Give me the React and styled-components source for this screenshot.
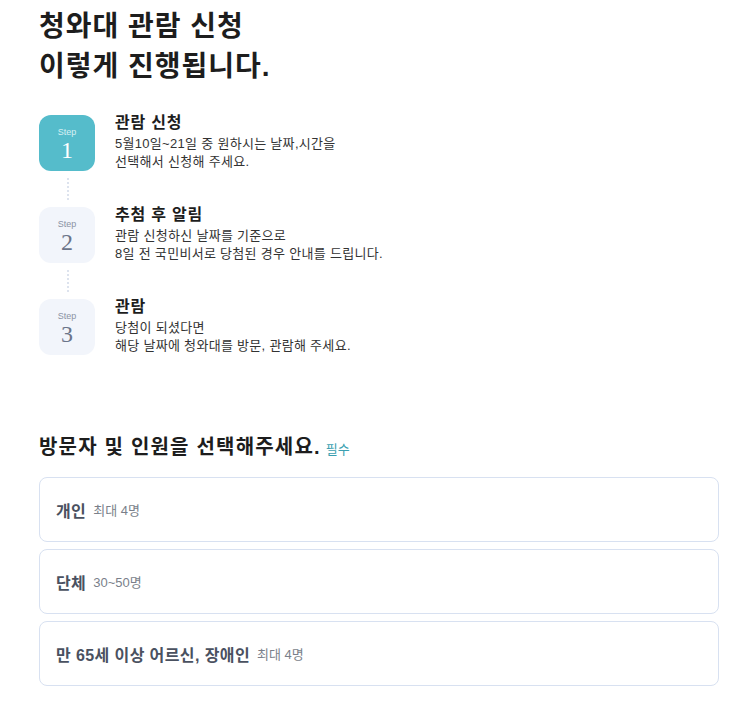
import React from "react";
import styled, { createGlobalStyle } from "styled-components";

const GlobalStyle = createGlobalStyle`
  * { box-sizing: border-box; }
  body {
    margin: 0;
    background: #fff;
    font-family: "Liberation Sans", "Noto Sans CJK KR", sans-serif;
    color: #222;
  }
`;

const steps = [
  {
    no: 1,
    title: "관람 신청",
    lines: ["5월10일~21일 중 원하시는 날짜,시간을", "선택해서 신청해 주세요."],
    active: true,
  },
  {
    no: 2,
    title: "추첨 후 알림",
    lines: ["관람 신청하신 날짜를 기준으로", "8일 전 국민비서로 당첨된 경우 안내를 드립니다."],
  },
  {
    no: 3,
    title: "관람",
    lines: ["당첨이 되셨다면", "해당 날짜에 청와대를 방문, 관람해 주세요."],
  },
];

const options = [
  { name: "개인", limit: "최대 4명" },
  { name: "단체", limit: "30~50명" },
  { name: "만 65세 이상 어르신, 장애인", limit: "최대 4명" },
];

function App() {
  return (
    <Page>
      <GlobalStyle />
      <Heading>
        청와대 관람 신청
        <br />
        이렇게 진행됩니다.
      </Heading>

      <StepList>
        {steps.map((s, i) => (
          <React.Fragment key={s.no}>
            {i > 0 && <Dots />}
            <StepRow>
              <StepBadge $active={s.active}>
                <small>Step</small>
                <b>{s.no}</b>
              </StepBadge>
              <StepText>
                <h3>{s.title}</h3>
                {s.lines.map((l) => (
                  <p key={l}>{l}</p>
                ))}
              </StepText>
            </StepRow>
          </React.Fragment>
        ))}
      </StepList>

      <SectionTitle>
        방문자 및 인원을 선택해주세요.
        <Required>필수</Required>
      </SectionTitle>

      <OptionList>
        {options.map((o) => (
          <OptionCard key={o.name}>
            <strong>{o.name}</strong>
            <span>{o.limit}</span>
          </OptionCard>
        ))}
      </OptionList>
    </Page>
  );
}

const Page = styled.div`
  padding: 7px 28px 20px 39px;
`;

const Heading = styled.h1`
  margin: 0;
  font-size: 28px;
  line-height: 40px;
  font-weight: 700;
  color: #1d1d1d;
  letter-spacing: 1px;
`;

const StepList = styled.div`
  margin-top: 28px;
  display: flex;
  flex-direction: column;
`;

const StepRow = styled.div`
  height: 56px;
  display: flex;
  gap: 20px;
  align-items: flex-start;
`;

const StepBadge = styled.div`
  width: 56px;
  height: 56px;
  flex: none;
  border-radius: 12px;
  background: ${(p) => (p.$active ? "#55bccb" : "#f2f5fb")};
  color: ${(p) => (p.$active ? "#fff" : "#6b7489")};
  display: flex;
  flex-direction: column;
  align-items: center;
  justify-content: center;
  small {
    font-size: 9px;
    line-height: 11px;
    color: ${(p) => (p.$active ? "#d8f0f4" : "#8a92a3")};
    margin-top: 2px;
  }
  b {
    font-family: "Liberation Serif", serif;
    font-weight: 400;
    font-size: 24px;
    line-height: 24px;
  }
`;

const Dots = styled.div`
  width: 0;
  height: 22px;
  margin: 7px 0 7px 28px;
  border-left: 2px dotted #dde3ee;
`;

const StepText = styled.div`
  margin-top: -2px;
  h3 {
    margin: 0 0 2px;
    font-size: 16px;
    line-height: 20px;
    font-weight: 700;
    color: #1d1d1d;
    letter-spacing: 0.8px;
  }
  p {
    margin: 0;
    font-size: 13px;
    line-height: 18px;
    color: #333;
    letter-spacing: 0.3px;
    white-space: nowrap;
  }
`;

const SectionTitle = styled.h2`
  margin: 80px 0 0;
  font-size: 20px;
  line-height: 24px;
  font-weight: 700;
  color: #1d1d1d;
  letter-spacing: 1.2px;
  display: flex;
  align-items: baseline;
`;

const Required = styled.span`
  margin-left: 5px;
  font-size: 13px;
  font-weight: 400;
  letter-spacing: 0;
  color: #3a9fb0;
`;

const OptionList = styled.div`
  margin-top: 15px;
  display: flex;
  flex-direction: column;
  gap: 7px;
`;

const OptionCard = styled.div`
  height: 65px;
  border: 1px solid #d8e1f1;
  border-radius: 8px;
  padding: 0 16px;
  display: flex;
  align-items: center;
  gap: 7px;
  strong {
    font-size: 16px;
    font-weight: 700;
    color: #4a5160;
    letter-spacing: 0.4px;
  }
  span {
    font-size: 13px;
    color: #7a7f8a;
  }
`;

export default App;
